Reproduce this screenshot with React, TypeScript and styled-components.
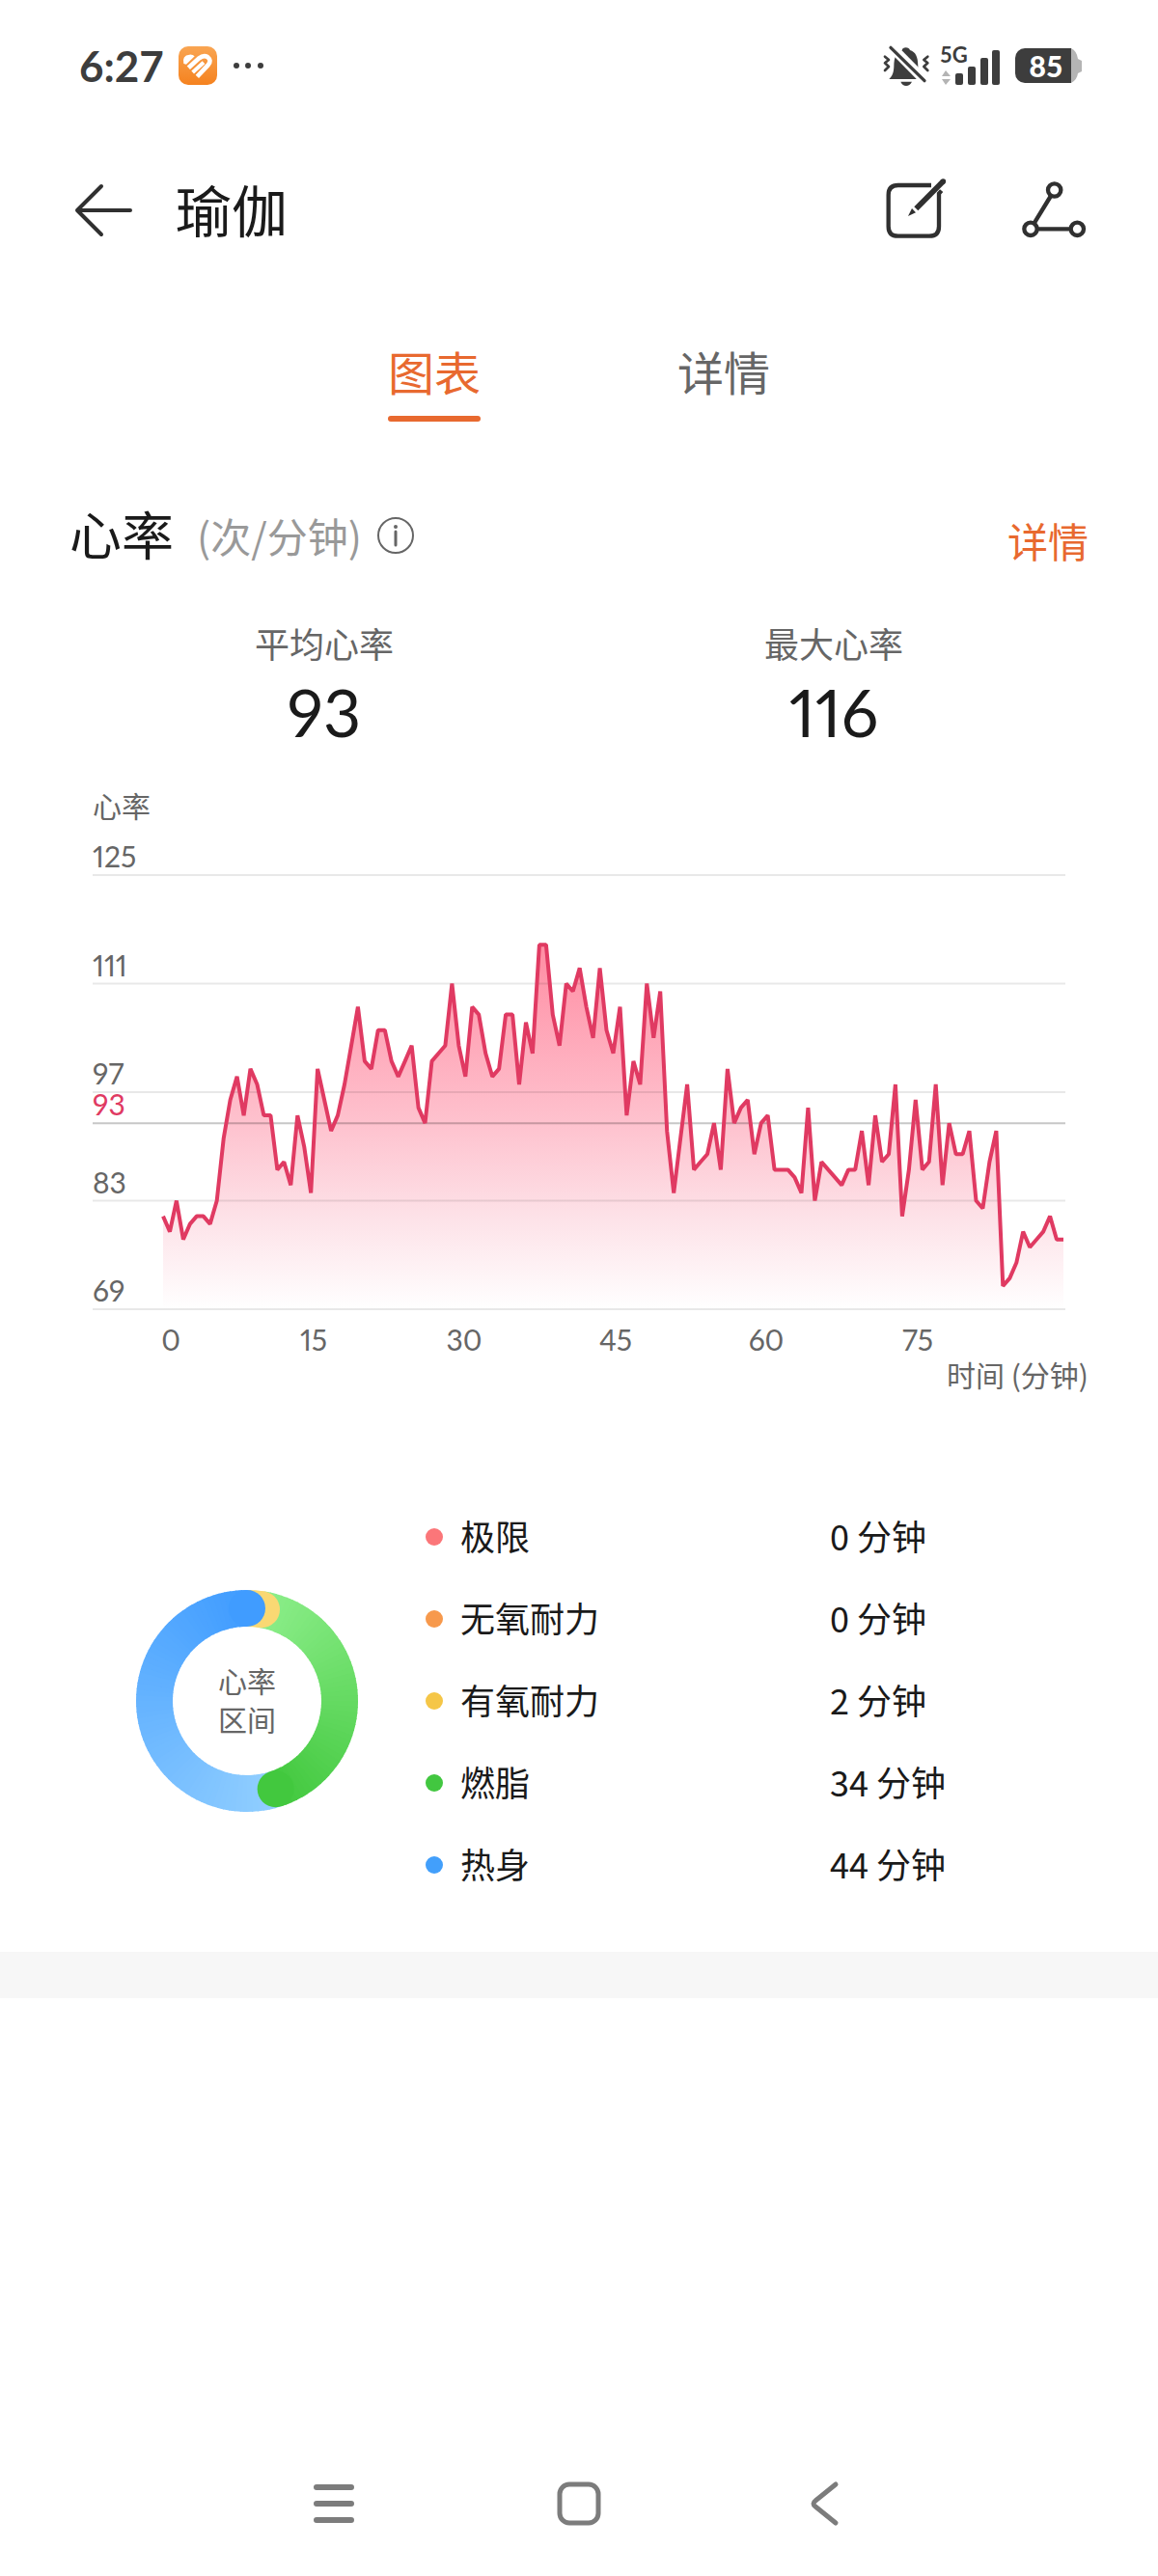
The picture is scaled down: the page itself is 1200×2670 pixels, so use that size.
import React from "react";
import styled, { createGlobalStyle } from "styled-components";

const cjk = `"Noto Sans CJK SC", "Noto Sans", sans-serif`;
const latin = `Lato, "Noto Sans CJK SC", sans-serif`;

const color = {
  ink: "#1a1a1a",
  icon: "#303030",
  status: "#3d3d3d",
  text: "#666666",
  muted: "#999999",
  accent: "#e8692f",
  pulse: "#e03a62",
  nav: "#7c7c7c",
};

const GlobalStyle = createGlobalStyle`
  *, *::before, *::after { box-sizing: border-box; }
  body {
    margin: 0;
    background: #ffffff;
    color: ${color.ink};
    font-family: ${cjk};
  }
  h1, h2, p, dl, dd, dt { margin: 0; font-weight: 400; }
`;

const Page = styled.div`
  display: flex;
  flex-direction: column;
  min-height: 100vh;
`;

const StatusBar = styled.div`
  display: flex;
  align-items: center;
  justify-content: space-between;
  height: 136px;
  padding: 0 79px 0 82px;
`;

const StatusGroup = styled.div<{ $gap: number }>`
  display: flex;
  align-items: center;
  gap: ${(p) => p.$gap}px;
`;

const Clock = styled.span`
  font: 700 44px/56px ${latin};
  color: ${color.status};
`;

const Signal = styled.div`
  position: relative;
  display: flex;
`;

const NetworkType = styled.span`
  position: absolute;
  top: 0;
  left: 0;
  font: 700 22px/20px ${latin};
  color: ${color.status};
`;

const Battery = styled.div`
  display: flex;
  align-items: center;
  margin-left: 4px;
`;

const BatteryBody = styled.span`
  width: 58px;
  height: 36px;
  border-radius: 10px 0 0 10px;
  background: ${color.status};
  color: #ffffff;
  font: 900 30px/36px ${latin};
  text-align: center;
  padding-left: 6px;
`;

const Header = styled.header`
  display: flex;
  align-items: center;
  height: 164px;
  padding: 0 72px;
`;

const IconButton = styled.button`
  display: flex;
  padding: 0;
  border: 0;
  background: none;
  cursor: pointer;
`;

const PageTitle = styled.h1`
  flex: 1;
  margin-left: 38px;
  padding-bottom: 4px;
  font-size: 58px;
  line-height: 72px;
`;

const Actions = styled.div`
  display: flex;
  gap: 70px;
`;

const Tabs = styled.div`
  display: grid;
  grid-template-columns: 1fr 1fr;
  width: 50%;
  margin: 48px auto 0;
`;

const Tab = styled.button<{ $active?: boolean }>`
  justify-self: center;
  padding: 0;
  border: 0;
  background: none;
  cursor: pointer;
  font: 400 48px/72px ${cjk};
  color: ${(p) => (p.$active ? color.accent : color.text)};

  &::after {
    content: "";
    display: block;
    height: 6px;
    margin-top: 11px;
    border-radius: 3px;
    background: ${(p) => (p.$active ? color.accent : "transparent")};
  }
`;

const Section = styled.section`
  padding: 78px 72px 0;
`;

const SectionHead = styled.div`
  display: flex;
  align-items: center;
  height: 80px;
`;

const SectionTitle = styled.h2`
  padding-bottom: 4px;
  font-size: 54px;
  line-height: 72px;
`;

const Unit = styled.span`
  margin: 0 14px 0 24px;
  font-size: 42px;
  line-height: 64px;
  color: ${color.muted};
`;

const DetailLink = styled.a`
  margin-left: auto;
  padding-top: 10px;
  font-size: 42px;
  line-height: 64px;
  color: ${color.accent};
  text-decoration: none;
`;

const Stats = styled.dl`
  display: grid;
  grid-template-columns: 1fr 1fr;
  margin-top: 47px;
  text-align: center;
`;

const StatLabel = styled.dt`
  font-size: 36px;
  line-height: 48px;
  color: ${color.text};
`;

const StatValue = styled.dd`
  margin-top: 8px;
  font: 400 68px/80px ${latin};
  font-variant-numeric: proportional-nums;
`;

const ChartBlock = styled.div`
  margin-top: 36px;
`;

const AxisTitle = styled.p<{ $end?: boolean }>`
  padding-left: ${(p) => (p.$end ? 0 : 24)}px;
  font-size: 30px;
  line-height: 40px;
  color: ${color.text};
  text-align: ${(p) => (p.$end ? "right" : "left")};
`;

const ChartSvg = styled.svg`
  display: block;
  width: calc(100% - 48px);
  margin: 16px 24px 0;
  overflow: visible;
`;

const AxisText = styled.text<{ $highlight?: boolean }>`
  font: 400 30px ${latin};
  font-variant-numeric: proportional-nums;
  fill: ${(p) => (p.$highlight ? color.pulse : color.text)};
`;

const Zones = styled.div`
  display: flex;
  align-items: center;
  gap: 70px;
  margin-top: 106px;
  padding-left: 69px;
`;

const Donut = styled.div`
  display: grid;
  place-items: center;
  flex: none;
  width: 230px;
  height: 230px;

  > * { grid-area: 1 / 1; }
`;

const DonutLabel = styled.p`
  width: 60px;
  padding-bottom: 4px;
  font-size: 30px;
  line-height: 40px;
  color: ${color.text};
`;

const ZoneTable = styled.table`
  flex: 1;
  table-layout: fixed;
  border-collapse: collapse;
  text-align: left;
  font: 400 36px/48px ${cjk};
`;

const ZoneName = styled.th`
  width: 61%;
  height: 85px;
  padding: 0;
  font-weight: 400;
`;

const ZoneTime = styled.td`
  padding: 0 0 4px;
`;

const ZoneLabel = styled.span`
  display: flex;
  align-items: center;
  gap: 18px;
`;

const ZoneText = styled.span`
  padding-bottom: 4px;
`;

const Dot = styled.span<{ $color: string }>`
  width: 18px;
  height: 18px;
  border-radius: 50%;
  background: ${(p) => p.$color};
`;

const Divider = styled.div`
  height: 48px;
  margin-top: 48px;
  background: #f7f7f7;
`;

const SystemNav = styled.nav`
  display: flex;
  align-items: center;
  justify-content: center;
  gap: 206px;
  height: 150px;
  margin-top: auto;
`;

const heartRates = [
  81, 79, 83, 78, 80, 81, 81, 80, 83, 91, 96, 99, 94, 100, 98, 94, 94, 87, 88, 85,
  94, 90, 84, 100, 96, 92, 94, 98, 103, 108, 101, 100, 105, 105, 101, 99, 101, 103, 95, 93,
  101, 102, 103, 111, 103, 99, 108, 107, 102, 99, 100, 107, 107, 98, 106, 102, 116, 116, 107, 103,
  111, 110, 113, 108, 104, 113, 105, 102, 108, 94, 101, 98, 111, 104, 110, 92, 84, 91, 98, 87,
  88, 89, 93, 87, 100, 93, 95, 96, 89, 93, 94, 87, 87, 87, 86, 84, 95, 83, 88, 87,
  86, 85, 87, 87, 92, 85, 94, 88, 89, 98, 81, 87, 96, 87, 88, 98, 85, 93, 89, 89,
  92, 83, 82, 88, 92, 72, 73, 75, 79, 77, 78, 79, 81, 78, 78,
];

const average = 93;
const gridValues = [125, 111, 97, 83, 69];
const plot = { left: 73, right: 1006, top: 37, bottom: 487, width: 1008, height: 534 };

const yOf = (bpm: number) =>
  plot.bottom - ((bpm - 69) / (125 - 69)) * (plot.bottom - plot.top);
const xOf = (index: number) =>
  plot.left + (index / (heartRates.length - 1)) * (plot.right - plot.left);

const timeTicks = [
  { label: "0", x: 81 },
  { label: "15", x: 229 },
  { label: "30", x: 385 },
  { label: "45", x: 542 },
  { label: "60", x: 698 },
  { label: "75", x: 855 },
];

function HeartRateChart() {
  const line = heartRates.map((v, i) => `${xOf(i).toFixed(1)},${yOf(v).toFixed(1)}`).join(" L");
  return (
    <ChartSvg viewBox={`0 0 ${plot.width} ${plot.height}`} role="img" aria-label="心率">
      <defs>
        <linearGradient id="pulseFill" gradientUnits="userSpaceOnUse" x1="0" y1={yOf(116)} x2="0" y2={plot.bottom}>
          <stop offset="0" stopColor="#ff8da3" />
          <stop offset="0.5" stopColor="#fec3cf" />
          <stop offset="0.75" stopColor="#fde2e8" />
          <stop offset="1" stopColor="#ffffff" />
        </linearGradient>
      </defs>
      <path d={`M${plot.left},${plot.bottom} L${line} L${plot.right},${plot.bottom} Z`} fill="url(#pulseFill)" />
      {gridValues.map((v) => (
        <g key={v}>
          <line x1="0" x2={plot.width} y1={yOf(v)} y2={yOf(v)} stroke="#000000" strokeOpacity="0.09" strokeWidth="2" />
          <AxisText x="0" y={yOf(v) - 8}>{v}</AxisText>
        </g>
      ))}
      <line x1="0" x2={plot.width} y1={yOf(average)} y2={yOf(average)} stroke="#000000" strokeOpacity="0.22" strokeWidth="2" />
      <AxisText x="0" y={yOf(average) - 8} $highlight>{average}</AxisText>
      <path d={`M${line}`} fill="none" stroke={color.pulse} strokeWidth="4" strokeLinejoin="bevel" />
      {timeTicks.map((t) => (
        <AxisText key={t.label} x={t.x} y="530" textAnchor="middle">{t.label}</AxisText>
      ))}
    </ChartSvg>
  );
}

type Rgb = [number, number, number];

const point = (deg: number, r = 96) => {
  const a = (deg * Math.PI) / 180;
  return `${(115 + r * Math.sin(a)).toFixed(2)} ${(115 - r * Math.cos(a)).toFixed(2)}`;
};

const mix = (a: Rgb, b: Rgb, t: number) =>
  `rgb(${a.map((c, i) => Math.round(c + (b[i] - c) * t)).join(",")})`;

function GradientArc({ from, to, start, end }: { from: number; to: number; start: Rgb; end: Rgb }) {
  const steps = Math.ceil((to - from) / 3);
  const size = (to - from) / steps;
  return (
    <g fill="none" strokeWidth="38">
      {Array.from({ length: steps }, (_, i) => {
        const a = from + i * size;
        const b = Math.min(a + size + 0.6, to);
        return (
          <path key={i} d={`M${point(a)} A96 96 0 0 1 ${point(b)}`} stroke={mix(start, end, (i + 0.5) / steps)} />
        );
      })}
    </g>
  );
}

function ArcCap({ deg, fill }: { deg: number; fill: string }) {
  const [cx, cy] = point(deg).split(" ");
  return <circle cx={cx} cy={cy} r="19" fill={fill} />;
}

function ZoneDonut() {
  return (
    <Donut>
      <svg width="230" height="230" viewBox="0 0 230 230" aria-hidden="true">
        <GradientArc from={162} to={360} start={[146, 207, 255]} end={[64, 156, 255]} />
        <GradientArc from={9} to={162} start={[140, 238, 138]} end={[66, 200, 62]} />
        <ArcCap deg={162} fill="rgb(66,200,62)" />
        <path d={`M${point(0)} A96 96 0 0 1 ${point(9)}`} fill="none" stroke="#f9d873" strokeWidth="38" />
        <ArcCap deg={9} fill="#f9d873" />
        <ArcCap deg={0} fill="rgb(64,156,255)" />
      </svg>
      <DonutLabel>心率区间</DonutLabel>
    </Donut>
  );
}

const zones = [
  { name: "极限", time: "0 分钟", color: "#fb7679" },
  { name: "无氧耐力", time: "0 分钟", color: "#f7994c" },
  { name: "有氧耐力", time: "2 分钟", color: "#f5c647" },
  { name: "燃脂", time: "34 分钟", color: "#42c740" },
  { name: "热身", time: "44 分钟", color: "#429ffb" },
];

function HealthAppIcon() {
  return (
    <svg width="40" height="40" viewBox="0 0 120 120" aria-hidden="true">
      <defs>
        <linearGradient id="appFill" x1="0" y1="0" x2="0" y2="1">
          <stop offset="0" stopColor="#f9a552" />
          <stop offset="1" stopColor="#f5821f" />
        </linearGradient>
      </defs>
      <rect width="120" height="120" rx="30" fill="url(#appFill)" />
      <path d="M16 54 Q10 28 34 26 Q44 25 50 31 L24 56 Z" fill="#ffffff" />
      <g fill="none" stroke="#ffffff" strokeWidth="14">
        <path d="M31 67 L64 37 Q78 26 90 33 Q104 44 92 58 L58 94" />
        <path d="M78 50 L44 81" strokeWidth="12" />
      </g>
    </svg>
  );
}

function MutedBellIcon() {
  return (
    <svg width="50" height="44" viewBox="76 42 150 132" aria-hidden="true">
      <path d="M98 150 C108 140 112 132 113 112 C113 78 122 66 138 60 Q140 52 150 52 Q160 52 163 60 C180 66 188 78 188 112 C190 132 194 140 204 150 Z" fill={color.status} />
      <path d="M134 158 H169 Q162 171 151 171 Q140 171 134 158 Z" fill={color.status} />
      <path d="M98 42 L214 160" stroke="#ffffff" strokeWidth="30" />
      <path d="M103 52 L208 155" stroke={color.status} strokeWidth="10" strokeLinecap="round" />
      <g fill="none" stroke={color.status} strokeWidth="8" strokeLinecap="round" strokeLinejoin="round">
        <path d="M85 80 L97 90 L85 100 L97 111 L85 123" />
        <path d="M218 80 L206 90 L218 100 L206 111 L218 123" />
      </g>
    </svg>
  );
}

export default function App() {
  return (
    <Page>
      <GlobalStyle />
      <StatusBar>
        <StatusGroup $gap={15}>
          <Clock>6:27</Clock>
          <HealthAppIcon />
          <svg width="34" height="8" viewBox="0 0 34 8" fill={color.status} aria-hidden="true">
            <circle cx="5" cy="4" r="3" />
            <circle cx="17" cy="4" r="3" />
            <circle cx="30" cy="4" r="3" />
          </svg>
        </StatusGroup>
        <StatusGroup $gap={10}>
          <MutedBellIcon />
          <Signal>
            <NetworkType>5G</NetworkType>
            <svg width="64" height="42" viewBox="0 0 64 42" aria-hidden="true">
              <g fill={color.status}>
                <rect x="16" y="29" width="8" height="12" rx="2" />
                <rect x="29" y="22" width="8" height="19" rx="2" />
                <rect x="42" y="13" width="8" height="28" rx="2" />
                <rect x="54" y="5" width="8" height="36" rx="2" />
              </g>
              <path d="M2 32 L6 26 L11 32 Z M2 35 L11 35 L6 41 Z" fill="#b4b4b4" />
            </svg>
          </Signal>
          <Battery>
            <BatteryBody>85</BatteryBody>
            <svg width="11" height="36" viewBox="0 0 11 36" fill="#b4b4b4" aria-hidden="true">
              <path d="M0 0 Q6 3 7 11 L11 13 V24 L7 26 Q6 33 0 36 Z" />
            </svg>
          </Battery>
        </StatusGroup>
      </StatusBar>

      <Header>
        <IconButton aria-label="返回">
          <svg width="72" height="72" viewBox="0 0 72 72" fill="none" stroke={color.icon} strokeWidth="4" strokeLinecap="round" strokeLinejoin="round">
            <path d="M33 11 L8 36 L33 61 M8 36 H63" />
          </svg>
        </IconButton>
        <PageTitle>瑜伽</PageTitle>
        <Actions>
          <IconButton aria-label="编辑">
            <svg width="72" height="72" viewBox="104 66 216 216" fill="none">
              <path d="M257 96 H154 Q124 96 124 126 V224 Q124 254 154 254 H251 Q281 254 281 224 V122 L289 113" stroke={color.icon} strokeWidth="13" />
              <path d="M210 169 L294 84" stroke={color.icon} strokeWidth="17" />
              <circle cx="294" cy="84" r="8.5" fill={color.icon} />
              <path d="M185 192 L197 168 L209 181 Z" fill={color.icon} />
            </svg>
          </IconButton>
          <IconButton aria-label="分享">
            <svg width="72" height="72" viewBox="528 66 216 216" fill="none" stroke={color.icon} strokeWidth="13">
              <circle cx="638" cy="111" r="20" />
              <circle cx="564" cy="232" r="20" />
              <circle cx="709" cy="232" r="20" />
              <path d="M627 129 L575 214 M585 232 H688" />
            </svg>
          </IconButton>
        </Actions>
      </Header>

      <Tabs role="tablist">
        <Tab role="tab" aria-selected="true" $active>图表</Tab>
        <Tab role="tab" aria-selected="false">详情</Tab>
      </Tabs>

      <Section>
        <SectionHead>
          <SectionTitle>心率</SectionTitle>
          <Unit>(次/分钟)</Unit>
          <IconButton aria-label="说明">
            <svg width="42" height="42" viewBox="0 0 42 42" fill="none" stroke={color.text} strokeWidth="2">
              <circle cx="21" cy="21" r="18" />
              <path d="M21 17 V31" strokeWidth="3" strokeLinecap="round" />
              <circle cx="21" cy="12" r="2" fill={color.text} stroke="none" />
            </svg>
          </IconButton>
          <DetailLink href="#detail">详情</DetailLink>
        </SectionHead>

        <Stats>
          <div>
            <StatLabel>平均心率</StatLabel>
            <StatValue>93</StatValue>
          </div>
          <div>
            <StatLabel>最大心率</StatLabel>
            <StatValue>116</StatValue>
          </div>
        </Stats>

        <ChartBlock>
          <AxisTitle>心率</AxisTitle>
          <HeartRateChart />
          <AxisTitle $end>时间 (分钟)</AxisTitle>
        </ChartBlock>

        <Zones>
          <ZoneDonut />
          <ZoneTable>
            <tbody>
              {zones.map((z) => (
                <tr key={z.name}>
                  <ZoneName scope="row">
                    <ZoneLabel>
                      <Dot $color={z.color} />
                      <ZoneText>{z.name}</ZoneText>
                    </ZoneLabel>
                  </ZoneName>
                  <ZoneTime>{z.time}</ZoneTime>
                </tr>
              ))}
            </tbody>
          </ZoneTable>
        </Zones>
      </Section>

      <Divider />

      <SystemNav>
        <IconButton aria-label="最近任务">
          <svg width="48" height="48" viewBox="0 0 48 48" stroke={color.nav} strokeWidth="6" strokeLinecap="round">
            <path d="M6 7 H42 M6 24 H42 M6 41 H42" />
          </svg>
        </IconButton>
        <IconButton aria-label="主页">
          <svg width="48" height="48" viewBox="0 0 48 48" fill="none" stroke={color.nav} strokeWidth="5">
            <rect x="4" y="4" width="40" height="40" rx="10" />
          </svg>
        </IconButton>
        <IconButton aria-label="返回上一页">
          <svg width="48" height="48" viewBox="0 0 48 48" fill="none" stroke={color.nav} strokeWidth="5" strokeLinecap="round">
            <path d="M36 4 L15 21 Q11 24 15 27 L36 44" />
          </svg>
        </IconButton>
      </SystemNav>
    </Page>
  );
}
